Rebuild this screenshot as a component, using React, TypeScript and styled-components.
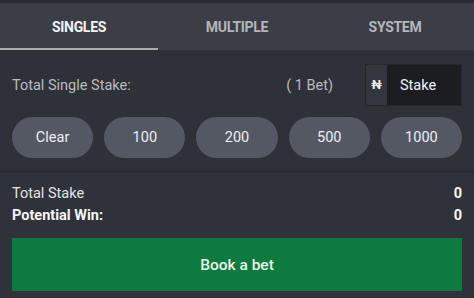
import React from "react";
import styled, { createGlobalStyle } from "styled-components";

const Global = createGlobalStyle`
  html, body { margin: 0; padding: 0; background: #2f3139; }
  body { font-family: Roboto, "Liberation Sans", Arial, sans-serif; }
  * { box-sizing: border-box; }
`;

const Slip = styled.div`
  width: 474px;
  height: 298px;
  background: #2f3139;
  border-top: 3px solid #292b31;
  display: flex;
  flex-direction: column;
`;

const Tabs = styled.div`
  display: grid;
  grid-template-columns: repeat(3, 1fr);
  height: 47px;
  background: #3b3e46;
`;

const Tab = styled.div<{ $active?: boolean }>`
  display: flex;
  align-items: center;
  justify-content: center;
  font-size: 14px;
  font-weight: 700;
  letter-spacing: -0.3px;
  color: ${(p) => (p.$active ? "#f2f2f4" : "#b4b6bb")};
  border-bottom: 2px solid ${(p) => (p.$active ? "#a9abb0" : "transparent")};
  padding-top: 2px;
`;

const StakeRow = styled.div`
  display: flex;
  align-items: center;
  padding: 14px 12px 0 12px;
  height: 56px;
`;

const Label = styled.div`
  flex: 1;
  font-size: 14.5px;
  color: #b9bbc0;
`;

const BetCount = styled.div`
  font-size: 14.5px;
  color: #b9bbc0;
  margin-right: 32px;
`;

const StakeInput = styled.div`
  display: flex;
  width: 97px;
  height: 42px;
  border: 1px solid #26272c;
  background: #1c1d21;
`;

const Currency = styled.div`
  width: 21px;
  display: flex;
  align-items: center;
  justify-content: center;
  background: #34363d;
  color: #e8e8ea;
  font-size: 13px;
  font-weight: 700;
  padding-bottom: 2px;
`;

const StakeText = styled.div`
  flex: 1;
  display: flex;
  align-items: center;
  padding-left: 13px;
  color: #f2f2f4;
  font-size: 14.5px;
`;

const Chips = styled.div`
  display: flex;
  gap: 11px;
  padding: 11px 12px 0 12px;
  height: 56px;
`;

const Chip = styled.div`
  flex: 1;
  height: 41px;
  border-radius: 21px;
  background: #545862;
  display: flex;
  align-items: center;
  justify-content: center;
  color: #eeeef0;
  font-size: 14.5px;
`;

const Divider = styled.div`
  height: 3px;
  background: #2a2c33;
  margin-top: 8px;
`;

const Totals = styled.div`
  display: flex;
  flex-direction: column;
  padding: 11px 12px 0 12px;
  gap: 4px;
  background: #30323a;
`;

const TotalRow = styled.div<{ $bold?: boolean }>`
  display: flex;
  justify-content: space-between;
  align-items: center;
  height: 18px;
  font-size: 14.5px;
  font-weight: ${(p) => (p.$bold ? 700 : 400)};
  color: ${(p) => (p.$bold ? "#f5f5f7" : "#e2e3e6")};
`;

const Value = styled.span`
  font-weight: 700;
  color: #f5f5f7;
`;

const Footer = styled.div`
  flex: 1;
  padding: 14px 12px 7px 12px;
  background: #30323a;
`;

const BookButton = styled.div`
  height: 53px;
  background: #0e7a3f;
  display: flex;
  align-items: center;
  justify-content: center;
  color: #e8f6ea;
  font-size: 15.5px;
  font-weight: 500;
`;

export default function App() {
  const chips = ["Clear", "100", "200", "500", "1000"];
  return (
    <>
      <Global />
      <Slip>
        <Tabs>
          <Tab $active>SINGLES</Tab>
          <Tab>MULTIPLE</Tab>
          <Tab>SYSTEM</Tab>
        </Tabs>
        <StakeRow>
          <Label>Total Single Stake:</Label>
          <BetCount>( 1 Bet)</BetCount>
          <StakeInput>
            <Currency>₦</Currency>
            <StakeText>Stake</StakeText>
          </StakeInput>
        </StakeRow>
        <Chips>
          {chips.map((c) => (
            <Chip key={c}>{c}</Chip>
          ))}
        </Chips>
        <Divider />
        <Totals>
          <TotalRow>
            <span>Total Stake</span>
            <Value>0</Value>
          </TotalRow>
          <TotalRow $bold>
            <span>Potential Win:</span>
            <Value>0</Value>
          </TotalRow>
        </Totals>
        <Footer>
          <BookButton>Book a bet</BookButton>
        </Footer>
      </Slip>
    </>
  );
}
